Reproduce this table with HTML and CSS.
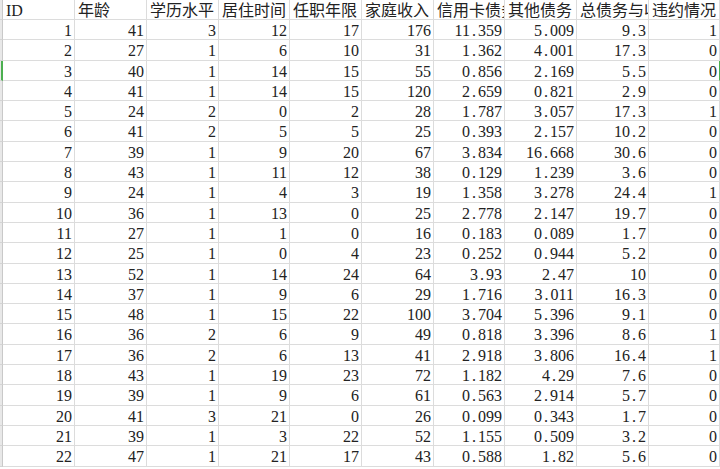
FILE: index.html
```html
<!DOCTYPE html>
<html lang="zh-CN">
<head>
<meta charset="utf-8">
<title>Sheet</title>
<link rel="stylesheet" href="styles.css">
</head>
<body>
<div class="sheet">
  <div class="row head">
    <div class="rh"></div><div class="c t">ID</div><div class="c t">年龄</div><div class="c t">学历水平</div><div class="c t">居住时间</div><div class="c t">任职年限</div><div class="c t">家庭收入</div><div class="c t">信用卡债务</div><div class="c t">其他债务</div><div class="c t">总债务与收入比</div><div class="c t">违约情况</div>
  </div>
  <div class="row"><div class="rh"></div><div class="c">1</div><div class="c">41</div><div class="c">3</div><div class="c">12</div><div class="c">17</div><div class="c">176</div><div class="c">11<span class="p">.</span>359</div><div class="c">5<span class="p">.</span>009</div><div class="c">9<span class="p">.</span>3</div><div class="c">1</div></div>
  <div class="row"><div class="rh"></div><div class="c">2</div><div class="c">27</div><div class="c">1</div><div class="c">6</div><div class="c">10</div><div class="c">31</div><div class="c">1<span class="p">.</span>362</div><div class="c">4<span class="p">.</span>001</div><div class="c">17<span class="p">.</span>3</div><div class="c">0</div></div>
  <div class="row sel"><div class="rh"></div><div class="c">3</div><div class="c">40</div><div class="c">1</div><div class="c">14</div><div class="c">15</div><div class="c">55</div><div class="c">0<span class="p">.</span>856</div><div class="c">2<span class="p">.</span>169</div><div class="c">5<span class="p">.</span>5</div><div class="c">0</div></div>
  <div class="row"><div class="rh"></div><div class="c">4</div><div class="c">41</div><div class="c">1</div><div class="c">14</div><div class="c">15</div><div class="c">120</div><div class="c">2<span class="p">.</span>659</div><div class="c">0<span class="p">.</span>821</div><div class="c">2<span class="p">.</span>9</div><div class="c">0</div></div>
  <div class="row"><div class="rh"></div><div class="c">5</div><div class="c">24</div><div class="c">2</div><div class="c">0</div><div class="c">2</div><div class="c">28</div><div class="c">1<span class="p">.</span>787</div><div class="c">3<span class="p">.</span>057</div><div class="c">17<span class="p">.</span>3</div><div class="c">1</div></div>
  <div class="row"><div class="rh"></div><div class="c">6</div><div class="c">41</div><div class="c">2</div><div class="c">5</div><div class="c">5</div><div class="c">25</div><div class="c">0<span class="p">.</span>393</div><div class="c">2<span class="p">.</span>157</div><div class="c">10<span class="p">.</span>2</div><div class="c">0</div></div>
  <div class="row"><div class="rh"></div><div class="c">7</div><div class="c">39</div><div class="c">1</div><div class="c">9</div><div class="c">20</div><div class="c">67</div><div class="c">3<span class="p">.</span>834</div><div class="c">16<span class="p">.</span>668</div><div class="c">30<span class="p">.</span>6</div><div class="c">0</div></div>
  <div class="row"><div class="rh"></div><div class="c">8</div><div class="c">43</div><div class="c">1</div><div class="c">11</div><div class="c">12</div><div class="c">38</div><div class="c">0<span class="p">.</span>129</div><div class="c">1<span class="p">.</span>239</div><div class="c">3<span class="p">.</span>6</div><div class="c">0</div></div>
  <div class="row"><div class="rh"></div><div class="c">9</div><div class="c">24</div><div class="c">1</div><div class="c">4</div><div class="c">3</div><div class="c">19</div><div class="c">1<span class="p">.</span>358</div><div class="c">3<span class="p">.</span>278</div><div class="c">24<span class="p">.</span>4</div><div class="c">1</div></div>
  <div class="row"><div class="rh"></div><div class="c">10</div><div class="c">36</div><div class="c">1</div><div class="c">13</div><div class="c">0</div><div class="c">25</div><div class="c">2<span class="p">.</span>778</div><div class="c">2<span class="p">.</span>147</div><div class="c">19<span class="p">.</span>7</div><div class="c">0</div></div>
  <div class="row"><div class="rh"></div><div class="c">11</div><div class="c">27</div><div class="c">1</div><div class="c">1</div><div class="c">0</div><div class="c">16</div><div class="c">0<span class="p">.</span>183</div><div class="c">0<span class="p">.</span>089</div><div class="c">1<span class="p">.</span>7</div><div class="c">0</div></div>
  <div class="row"><div class="rh"></div><div class="c">12</div><div class="c">25</div><div class="c">1</div><div class="c">0</div><div class="c">4</div><div class="c">23</div><div class="c">0<span class="p">.</span>252</div><div class="c">0<span class="p">.</span>944</div><div class="c">5<span class="p">.</span>2</div><div class="c">0</div></div>
  <div class="row"><div class="rh"></div><div class="c">13</div><div class="c">52</div><div class="c">1</div><div class="c">14</div><div class="c">24</div><div class="c">64</div><div class="c">3<span class="p">.</span>93</div><div class="c">2<span class="p">.</span>47</div><div class="c">10</div><div class="c">0</div></div>
  <div class="row"><div class="rh"></div><div class="c">14</div><div class="c">37</div><div class="c">1</div><div class="c">9</div><div class="c">6</div><div class="c">29</div><div class="c">1<span class="p">.</span>716</div><div class="c">3<span class="p">.</span>011</div><div class="c">16<span class="p">.</span>3</div><div class="c">0</div></div>
  <div class="row"><div class="rh"></div><div class="c">15</div><div class="c">48</div><div class="c">1</div><div class="c">15</div><div class="c">22</div><div class="c">100</div><div class="c">3<span class="p">.</span>704</div><div class="c">5<span class="p">.</span>396</div><div class="c">9<span class="p">.</span>1</div><div class="c">0</div></div>
  <div class="row"><div class="rh"></div><div class="c">16</div><div class="c">36</div><div class="c">2</div><div class="c">6</div><div class="c">9</div><div class="c">49</div><div class="c">0<span class="p">.</span>818</div><div class="c">3<span class="p">.</span>396</div><div class="c">8<span class="p">.</span>6</div><div class="c">1</div></div>
  <div class="row"><div class="rh"></div><div class="c">17</div><div class="c">36</div><div class="c">2</div><div class="c">6</div><div class="c">13</div><div class="c">41</div><div class="c">2<span class="p">.</span>918</div><div class="c">3<span class="p">.</span>806</div><div class="c">16<span class="p">.</span>4</div><div class="c">1</div></div>
  <div class="row"><div class="rh"></div><div class="c">18</div><div class="c">43</div><div class="c">1</div><div class="c">19</div><div class="c">23</div><div class="c">72</div><div class="c">1<span class="p">.</span>182</div><div class="c">4<span class="p">.</span>29</div><div class="c">7<span class="p">.</span>6</div><div class="c">0</div></div>
  <div class="row"><div class="rh"></div><div class="c">19</div><div class="c">39</div><div class="c">1</div><div class="c">9</div><div class="c">6</div><div class="c">61</div><div class="c">0<span class="p">.</span>563</div><div class="c">2<span class="p">.</span>914</div><div class="c">5<span class="p">.</span>7</div><div class="c">0</div></div>
  <div class="row"><div class="rh"></div><div class="c">20</div><div class="c">41</div><div class="c">3</div><div class="c">21</div><div class="c">0</div><div class="c">26</div><div class="c">0<span class="p">.</span>099</div><div class="c">0<span class="p">.</span>343</div><div class="c">1<span class="p">.</span>7</div><div class="c">0</div></div>
  <div class="row"><div class="rh"></div><div class="c">21</div><div class="c">39</div><div class="c">1</div><div class="c">3</div><div class="c">22</div><div class="c">52</div><div class="c">1<span class="p">.</span>155</div><div class="c">0<span class="p">.</span>509</div><div class="c">3<span class="p">.</span>2</div><div class="c">0</div></div>
  <div class="row"><div class="rh"></div><div class="c">22</div><div class="c">47</div><div class="c">1</div><div class="c">21</div><div class="c">17</div><div class="c">43</div><div class="c">0<span class="p">.</span>588</div><div class="c">1<span class="p">.</span>82</div><div class="c">5<span class="p">.</span>6</div><div class="c">0</div></div>
</div>
</body>
</html>
```
FILE: styles.css
```css
html, body {
  margin: 0;
  padding: 0;
  background: #ffffff;
}
body {
  width: 720px;
  height: 469px;
  overflow: hidden;
  font-family: "Liberation Serif", "Noto Sans CJK SC", serif;
  font-size: 16px;
  color: #222222;
}
.sheet {
  display: flex;
  flex-direction: column;
  width: 720px;
}
.row {
  display: grid;
  grid-template-columns: 3px 72px 72px 72px 71px 72px 72px 71px 72px 72px 71px;
  height: 20.3px;
  flex: none;
}
.row.head {
  height: 20px;
}
.rh {
  background: #e8e8e8;
  border-right: 1px solid #c9c9c9;
  border-bottom: 1px solid #d4d4d4;
  box-sizing: border-box;
}
.c {
  box-sizing: border-box;
  border-right: 1px solid #dcdcdc;
  border-bottom: 1px solid #dcdcdc;
  overflow: hidden;
  white-space: nowrap;
  text-align: right;
  padding: 1px 2px 0 3px;
  line-height: 19.3px;
}
.c.t {
  text-align: left;
  text-overflow: clip;
}
.p {
  display: inline-block;
  width: 8px;
  text-align: center;
}
.sel .rh {
  border-right: 2px solid #4caf50;
}
.sel .c:last-child {
  border-right-color: #4caf50;
}
```
